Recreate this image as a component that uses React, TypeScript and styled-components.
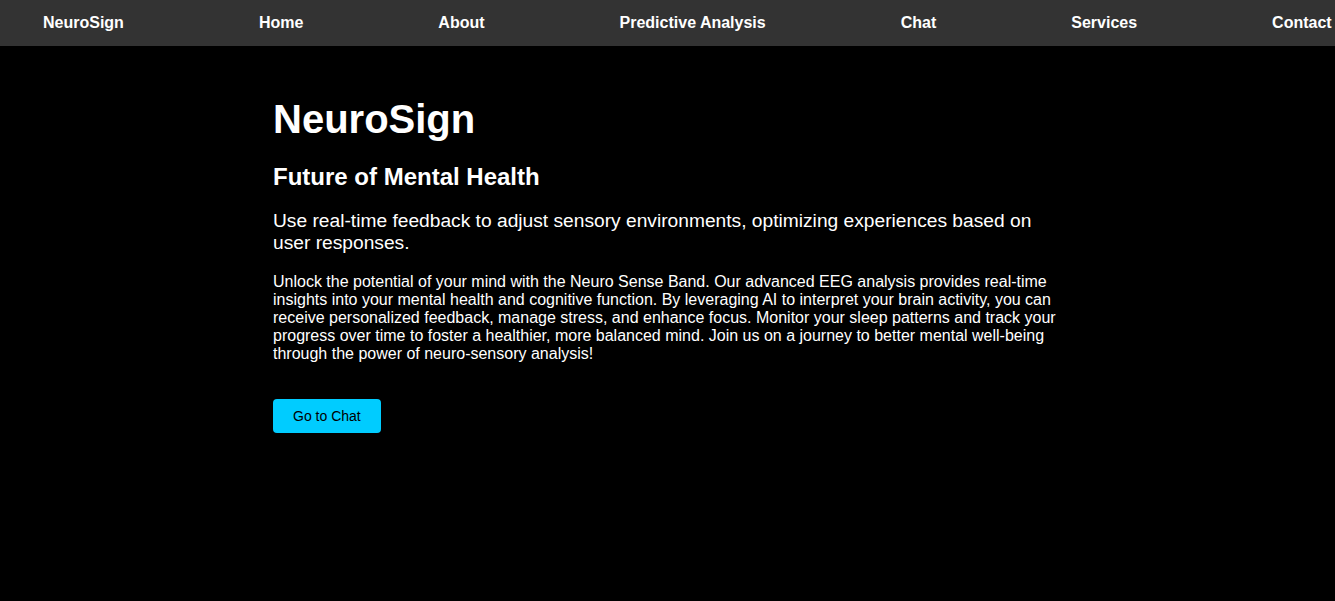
import React from "react";
import styled, { createGlobalStyle } from "styled-components";

const GlobalStyle = createGlobalStyle`
  html, body {
    margin: 0;
    padding: 0;
    background: #000;
    font-family: "Liberation Sans", Arial, sans-serif;
    color: #fff;
  }
`;

// Navigation bar
const Navbar = styled.nav`
  height: 46px;
  background-color: #333;
  display: flex;
  align-items: center;
  gap: 135px;
  padding-left: 43px;
  overflow: hidden;
  white-space: nowrap;
`;

const NavItem = styled.a`
  color: #fff;
  font-size: 16px;
  font-weight: bold;
  text-decoration: none;
  flex-shrink: 0;
  cursor: pointer;
`;

const Hero = styled.main`
  width: 789px;
  margin: 0 auto;
  padding-top: 51px;
`;

const Title = styled.h1`
  font-size: 40px;
  font-weight: bold;
  margin: 0;
`;

const Subtitle = styled.h2`
  font-size: 24px;
  font-weight: bold;
  margin: 21px 0 0;
`;

const Lead = styled.p`
  font-size: 1.2em;
  line-height: 22px;
  margin: 19px 0 0;
`;

const Body = styled.p`
  font-size: 16px;
  margin: 19px 0 0;
`;

const ChatButton = styled.button`
  margin-top: 36px;
  height: 34px;
  padding: 0 20px;
  background-color: #00ccff;
  color: #000;
  border: none;
  border-radius: 4px;
  font-family: "Liberation Sans", Arial, sans-serif;
  font-size: 14px;
  cursor: pointer;
  &:hover {
    background-color: #00b8e6;
  }
`;

const links = ["Home", "About", "Predictive Analysis", "Chat", "Services", "Contact"];

const App: React.FC = () => {
  return (
    <>
      <GlobalStyle />
      <Navbar>
        <NavItem>NeuroSign</NavItem>
        {links.map((l) => (
          <NavItem key={l}>{l}</NavItem>
        ))}
      </Navbar>

      <Hero>
        <Title>NeuroSign</Title>
        <Subtitle>Future of Mental Health</Subtitle>
        <Lead>
          Use real-time feedback to adjust sensory environments, optimizing experiences based on
          user responses.
        </Lead>
        <Body>
          Unlock the potential of your mind with the Neuro Sense Band. Our advanced EEG analysis
          provides real-time insights into your mental health and cognitive function. By leveraging
          AI to interpret your brain activity, you can receive personalized feedback, manage stress,
          and enhance focus. Monitor your sleep patterns and track your progress over time to foster
          a healthier, more balanced mind. Join us on a journey to better mental well-being through
          the power of neuro-sensory analysis!
        </Body>
        <ChatButton>Go to Chat</ChatButton>
      </Hero>
    </>
  );
};

export default App;
